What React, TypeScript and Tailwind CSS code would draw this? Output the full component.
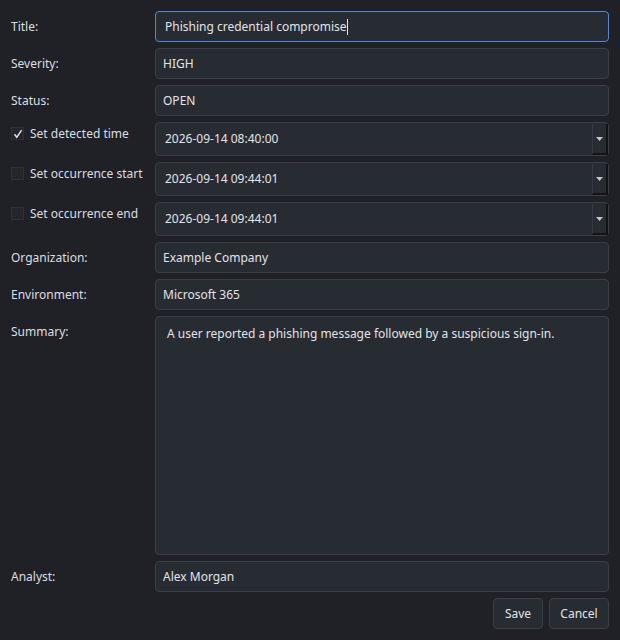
import React from "react";

const font = { fontFamily: '"Noto Sans", "Open Sans", sans-serif' };

function Label({ children }: { children: React.ReactNode }) {
  return <div className="flex items-center text-[12px] text-[#dcdee2]">{children}</div>;
}

function Field({ value }: { value: string }) {
  return (
    <div className="h-[31px] rounded-[4px] border border-[#3a3e46] bg-[#272b32] px-[7px] flex items-center text-[12px] text-[#e2e4e8]">
      {value}
    </div>
  );
}

function Check({ checked, label }: { checked: boolean; label: string }) {
  return (
    <div className="flex items-start pt-[3px] text-[12px] text-[#dcdee2]">
      <div className="mt-[2px] w-[13px] h-[13px] border border-[#2e3238] bg-[#23262b] flex items-center justify-center mr-[6px]">
        {checked && (
          <svg width="10" height="10" viewBox="0 0 10 10">
            <path d="M1.5 5.2 L3.8 8.2 L8.6 1.2" stroke="#e6e8ec" strokeWidth="1.4" fill="none" />
          </svg>
        )}
      </div>
      <span>{label}</span>
    </div>
  );
}

function DateField({ value }: { value: string }) {
  return (
    <div className="h-[34px] rounded-[4px] border border-[#3a3e46] bg-[#272b32] flex items-stretch text-[12px] text-[#e2e4e8]">
      <div className="flex-1 flex items-center pl-[9px]">{value}</div>
      <div className="w-[16px] mt-[1px] border-l border-[#363a42] border-r-2 border-r-[#111316] border-b-2 border-b-[#111316] flex items-center justify-center">
        <svg width="7" height="4" viewBox="0 0 7 4">
          <path d="M0 0 H7 L3.5 4 Z" fill="#c4c7cc" />
        </svg>
      </div>
    </div>
  );
}

export default function App() {
  return (
    <div className="w-[620px] h-[640px] bg-[#1f2126] pl-[11px] pr-[11px] pt-[11px]" style={font}>
      <div className="grid grid-cols-[144px_1fr] gap-y-[6px]">
        <Label>Title:</Label>
        <div className="h-[31px] rounded-[4px] border border-[#4d8ad6] bg-[#272b32] px-[9px] flex items-center text-[12px] text-[#e2e4e8]">
          Phishing credential compromise
          <span className="inline-block w-px h-[16px] bg-[#e2e4e8]" />
        </div>
        <Label>Severity:</Label>
        <Field value="HIGH" />
        <Label>Status:</Label>
        <Field value="OPEN" />
        <Check checked label="Set detected time" />
        <DateField value="2026-09-14 08:40:00" />
        <Check checked={false} label="Set occurrence start" />
        <DateField value="2026-09-14 09:44:01" />
        <Check checked={false} label="Set occurrence end" />
        <DateField value="2026-09-14 09:44:01" />
        <Label>Organization:</Label>
        <Field value="Example Company" />
        <Label>Environment:</Label>
        <Field value="Microsoft 365" />
        <div className="pt-[7px] text-[12px] text-[#dcdee2]">Summary:</div>
        <div className="h-[239px] rounded-[4px] border border-[#3a3e46] bg-[#272b32] px-[11px] pt-[8px] text-[12px] text-[#e2e4e8]">
          A user reported a phishing message followed by a suspicious sign-in.
        </div>
        <Label>Analyst:</Label>
        <Field value="Alex Morgan" />
      </div>
      <div className="flex justify-end gap-[6px] mt-[6px] pr-0">
        <button className="h-[31px] w-[50px] rounded-[4px] border border-[#3a3e46] bg-[#272b32] text-[12px] text-[#e2e4e8]">
          Save
        </button>
        <button className="h-[31px] w-[60px] rounded-[4px] border border-[#3a3e46] bg-[#272b32] text-[12px] text-[#e2e4e8]">
          Cancel
        </button>
      </div>
    </div>
  );
}
